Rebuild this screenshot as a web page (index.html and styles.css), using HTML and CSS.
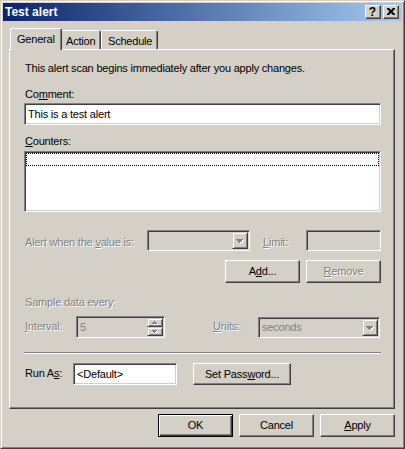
FILE: index.html
```html
<!DOCTYPE html>
<html>
<head>
<meta charset="utf-8">
<title>Test alert</title>
<link rel="stylesheet" href="styles.css">
</head>
<body>
<div class="window">
  <div class="titlebar">
    <span class="title">Test alert</span>
    <div class="tb-buttons">
      <span class="tb-btn help">?</span>
      <span class="tb-btn"><svg width="8" height="7" viewBox="0 0 8 7"><path d="M0 0h2l2 2 2-2h2v1l-2.5 2.5 2.5 2.5v1h-2l-2-2-2 2h-2v-1l2.5-2.5-2.5-2.5z" fill="#000"/></svg></span>
    </div>
  </div>
  <div class="client">
    <div class="tabs">
      <div class="tab sel">General</div>
      <div class="tab t-action">Action</div>
      <div class="tab t-sched">Schedule</div>
    </div>
    <div class="panel">
      <div class="lbl intro">This alert scan begins immediately after you apply changes.</div>
      <div class="lbl r-comment">Co<u>m</u>ment:</div>
      <div class="field w-full r-cinput"><span>This is a test alert</span></div>
      <div class="lbl r-counters"><u>C</u>ounters:</div>
      <div class="field list w-full"><div class="focus"></div></div>

      <div class="row r-alert">
        <div class="lbl dis l-alert">Alert when the <u>v</u>alue is:</div>
        <div class="field combo dis-field c-alert">
          <span class="ctext"></span>
          <span class="dd"><svg width="8" height="5" viewBox="0 0 8 5"><path d="M1 1h7v1h-1v1h-1v1h-1v1h-1v-1h-1v-1h-1v-1h-1z" fill="#fff"/><path d="M0 0h7v1h-1v1h-1v1h-1v1h-1v-1h-1v-1h-1v-1h-1z" fill="#808080"/></svg></span>
        </div>
        <div class="lbl dis l-limit"><u>L</u>imit:</div>
        <div class="field dis-field f-limit"></div>
      </div>

      <div class="row r-btns">
        <div class="btn">A<u>d</u>d...</div>
        <div class="btn dis"><u>R</u>emove</div>
      </div>

      <div class="lbl dis r-sample">Sample data every:</div>

      <div class="row r-interval">
        <div class="lbl dis l-interval"><u>I</u>nterval:</div>
        <div class="field combo dis-field f-interval">
          <span class="ctext">5</span>
          <span class="spin">
            <span class="sbtn"><svg width="6" height="4" viewBox="0 0 6 4"><path d="M3 1h1v1h1v1h1v1h-5v-1h1v-1h1z" fill="#fff"/><path d="M2 0h1v1h1v1h1v1h-5v-1h1v-1h1z" fill="#808080"/></svg></span>
            <span class="sbtn"><svg width="6" height="4" viewBox="0 0 6 4"><path d="M1 1h5v1h-1v1h-1v1h-1v-1h-1v-1h-1z" fill="#fff"/><path d="M0 0h5v1h-1v1h-1v1h-1v-1h-1v-1h-1z" fill="#808080"/></svg></span>
          </span>
        </div>
        <div class="lbl dis l-units"><u>U</u>nits:</div>
        <div class="field combo dis-field c-units">
          <span class="ctext">seconds</span>
          <span class="dd"><svg width="8" height="5" viewBox="0 0 8 5"><path d="M1 1h7v1h-1v1h-1v1h-1v1h-1v-1h-1v-1h-1v-1h-1z" fill="#fff"/><path d="M0 0h7v1h-1v1h-1v1h-1v1h-1v-1h-1v-1h-1v-1h-1z" fill="#808080"/></svg></span>
        </div>
      </div>

      <div class="sep"></div>

      <div class="row r-runas">
        <div class="lbl l-runas">Run A<u>s</u>:</div>
        <div class="field f-runas"><span>&lt;Default&gt;</span></div>
        <div class="btn b-pass">Set Pass<u>w</u>ord...</div>
      </div>
    </div>
    <div class="actions">
      <div class="btn default">OK</div>
      <div class="btn">Cancel</div>
      <div class="btn"><u>A</u>pply</div>
    </div>
  </div>
</div>
</body>
</html>
```
FILE: styles.css
```css
* { box-sizing: border-box; }

body {
  margin: 0;
  font-family: "Liberation Sans", Arial, sans-serif;
  font-size: 11px;
  line-height: 13px;
  letter-spacing: -0.2px;
  color: #000;
  background: #d4d0c8;
}

u { text-decoration: underline; text-underline-offset: 1px; }

.window {
  width: 405px;
  height: 449px;
  background: #d4d0c8;
  border: 1px solid;
  border-color: #d4d0c8 #404040 #404040 #d4d0c8;
  box-shadow: inset 1px 1px #fff, inset -1px -1px #808080;
  padding: 2px;
  display: flex;
  flex-direction: column;
}

.titlebar {
  height: 18px;
  flex: none;
  background: linear-gradient(to right, #0a246a, #a6caf0);
  display: flex;
  justify-content: space-between;
  align-items: flex-start;
  padding: 0 3px 0 2px;
}

.title {
  color: #fff;
  font-weight: bold;
  font-size: 12px;
  line-height: 18px;
  letter-spacing: 0;
}

.tb-buttons {
  display: flex;
  gap: 2px;
  margin-top: 2px;
}

.tb-btn {
  width: 16px;
  height: 14px;
  background: #d4d0c8;
  border: 1px solid;
  border-color: #fff #404040 #404040 #fff;
  box-shadow: inset -1px -1px #808080;
  display: flex;
  align-items: center;
  justify-content: center;
  padding: 0 1px 1px 0;
}

.tb-btn.help {
  font-weight: bold;
  font-size: 12px;
  line-height: 12px;
  letter-spacing: 0;
}

.client {
  flex: 1;
  display: flex;
  flex-direction: column;
  padding: 7px 7px 0 6px;
}

/* tabs */
.tabs {
  display: flex;
  align-items: flex-end;
  height: 21px;
  margin-left: 1px;
}

.tab {
  height: 19px;
  background: #d4d0c8;
  border: 1px solid;
  border-bottom: 0;
  border-color: #fff #404040 #fff #fff;
  box-shadow: inset -1px 0 #808080;
  border-radius: 2px 2px 0 0;
  padding: 4px 0 0 6px;
  white-space: nowrap;
}

.tab.sel {
  width: 52px;
  height: 22px;
  margin-bottom: -1px;
  margin-right: -2px;
  position: relative;
  z-index: 1;
}

.t-action { width: 41px; padding-left: 5px; }
.t-sched { width: 57px; }

/* panel */
.panel {
  width: 386px;
  height: 360px;
  flex: none;
  border: 1px solid;
  border-color: #fff #404040 #404040 #fff;
  box-shadow: inset -1px -1px #808080;
  padding-left: 14px;
}

.lbl { padding-left: 1px; white-space: nowrap; }

.dis {
  color: #808080;
  text-shadow: 1px 1px 0 #fff;
}

.intro { margin-top: 12px; }
.r-comment { margin-top: 13px; }
.r-cinput { margin-top: 2px; height: 22px; }
.r-counters { margin-top: 10px; }

.field {
  background: #fff;
  border: 1px solid;
  border-color: #808080 #fff #fff #808080;
  box-shadow: inset 1px 1px #404040, inset -1px -1px #d4d0c8;
  padding: 0 3px;
  display: flex;
  align-items: center;
  white-space: nowrap;
}

.dis-field {
  background: #d4d0c8;
  color: #808080;
}

.w-full { width: 357px; }

.list {
  margin-top: 3px;
  height: 61px;
  padding: 1px;
  align-items: flex-start;
}

.focus {
  width: 100%;
  height: 13px;
  border: 1px dotted #000;
}

.row { display: flex; align-items: flex-start; }

.r-alert { margin-top: 18px; height: 21px; }
.l-alert { width: 123px; margin-top: 6px; }
.c-alert { width: 103px; height: 21px; }
.l-limit { width: 56px; padding-left: 13px; margin-top: 6px; }
.f-limit { width: 75px; height: 21px; }

.combo { padding: 0 1px 0 3px; }
.ctext { flex: 1; }

.dd {
  width: 16px;
  height: 17px;
  background: #d4d0c8;
  border: 1px solid;
  border-color: #d4d0c8 #404040 #404040 #d4d0c8;
  box-shadow: inset 1px 1px #fff, inset -1px -1px #808080;
  display: flex;
  align-items: center;
  justify-content: center;
  padding: 1px 0 0 0;
}

.spin {
  width: 16px;
  height: 18px;
  display: flex;
  flex-direction: column;
}

.sbtn {
  height: 9px;
  background: #d4d0c8;
  border: 1px solid;
  border-color: #d4d0c8 #404040 #404040 #d4d0c8;
  box-shadow: inset 1px 1px #fff, inset -1px -1px #808080;
  display: flex;
  align-items: center;
  justify-content: center;
}

.btn {
  width: 75px;
  height: 23px;
  background: #d4d0c8;
  border: 1px solid;
  border-color: #fff #404040 #404040 #fff;
  box-shadow: inset -1px -1px #808080;
  display: flex;
  align-items: center;
  justify-content: center;
  white-space: nowrap;
}

.btn.default {
  border-color: #000;
  box-shadow: inset 1px 1px #fff, inset -1px -1px #404040, inset -2px -2px #808080;
}

.r-btns {
  margin-top: 9px;
  padding-left: 201px;
  gap: 6px;
}

.r-sample { margin-top: 13px; }

.r-interval { margin-top: 7px; height: 22px; }
.l-interval { width: 52px; margin-top: 4px; }
.f-interval { width: 89px; height: 22px; }
.l-units { width: 93px; padding-left: 48px; margin-top: 4px; }
.c-units { width: 122px; height: 21px; margin-top: 1px; }

.sep {
  width: 357px;
  height: 2px;
  margin-top: 14px;
  border-top: 1px solid #808080;
  border-bottom: 1px solid #fff;
}

.r-runas { margin-top: 9px; height: 22px; }
.l-runas { width: 49px; margin-top: 4px; }
.f-runas { width: 104px; height: 22px; }
.b-pass { width: 98px; height: 22px; margin-left: 16px; }

.actions {
  display: flex;
  justify-content: flex-end;
  gap: 6px;
  margin-top: 5px;
}
```
